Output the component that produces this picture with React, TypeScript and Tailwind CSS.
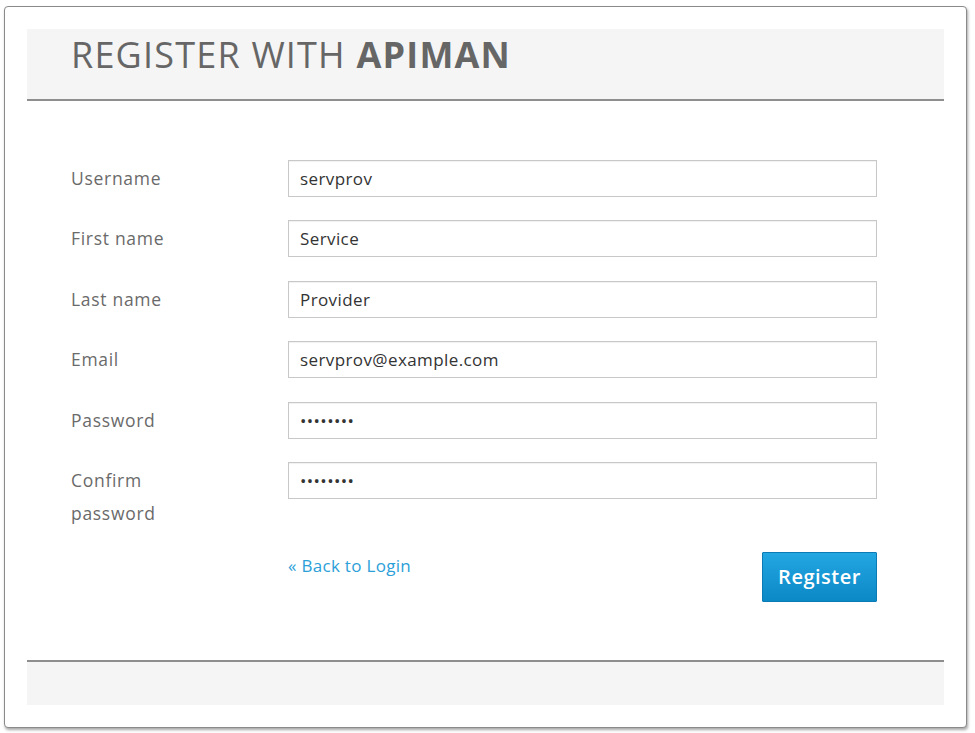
import React from "react";

const rows: { label: React.ReactNode; value: string; type?: string }[] = [
  { label: "Username", value: "servprov" },
  { label: "First name", value: "Service" },
  { label: "Last name", value: "Provider" },
  { label: "Email", value: "servprov@example.com" },
  { label: "Password", value: "password", type: "password" },
  {
    label: (
      <>
        Confirm
        <br />
        password
      </>
    ),
    value: "password",
    type: "password",
  },
];

export default function App() {
  return (
    <div
      className="w-[975px] h-[733px] bg-white pt-[6px] pl-[4px]"
      style={{ fontFamily: '"Open Sans", "Liberation Sans", sans-serif' }}
    >
      <div className="w-[963px] h-[722px] border border-[#8a8a8a] rounded-[4px] shadow-[1px_2px_3px_rgba(0,0,0,0.35)] bg-white px-[22px] pt-[22px] pb-[22px] flex flex-col">
        <div className="h-[72px] bg-[#f5f5f5] border-b-2 border-[#8e8e8e] pl-[44px] pt-[4px]">
          <h1 className="text-[36px] leading-[44px] text-[#666666] tracking-[1.2px] whitespace-nowrap">
            <span className="font-normal">REGISTER WITH </span>
            <span className="font-bold">APIMAN</span>
          </h1>
        </div>
        <div className="flex-1 flex flex-col pt-[59px] pl-[44px] pr-[67px]">
          <div className="flex flex-col gap-[23.4px]">
            {rows.map((r, i) => (
              <div key={i} className="flex items-start">
                <label className="w-[217px] pt-[2px] text-[17.5px] leading-[33px] text-[#6a6a6a] tracking-[0.7px]">
                  {r.label}
                </label>
                <input
                  readOnly
                  type={r.type ?? "text"}
                  defaultValue={r.value}
                  className="flex-1 h-[37px] border border-[#c8c8c8] shadow-[inset_0_1px_1px_rgba(0,0,0,0.06)] px-[11px] text-[17px] tracking-[0.4px] text-[#333333] outline-none bg-white"
                />
              </div>
            ))}
          </div>
          <div className="flex items-start mt-[21px]">
            <div className="w-[217px]" />
            <a className="text-[17px] leading-[33px] text-[#2ba0d8] tracking-[0.3px] mt-[-2px] cursor-pointer">
              « Back to Login
            </a>
            <div className="flex-1" />
            <button className="mt-[1px] w-[115px] h-[50px] rounded-[1px] border border-[#0b7bb5] bg-gradient-to-b from-[#22a7e2] to-[#0b88c6] text-white text-[20px] tracking-[0.5px] font-semibold">
              Register
            </button>
          </div>
        </div>
        <div className="h-[45px] bg-[#f5f5f5] border-t-2 border-[#8e8e8e]" />
      </div>
    </div>
  );
}
